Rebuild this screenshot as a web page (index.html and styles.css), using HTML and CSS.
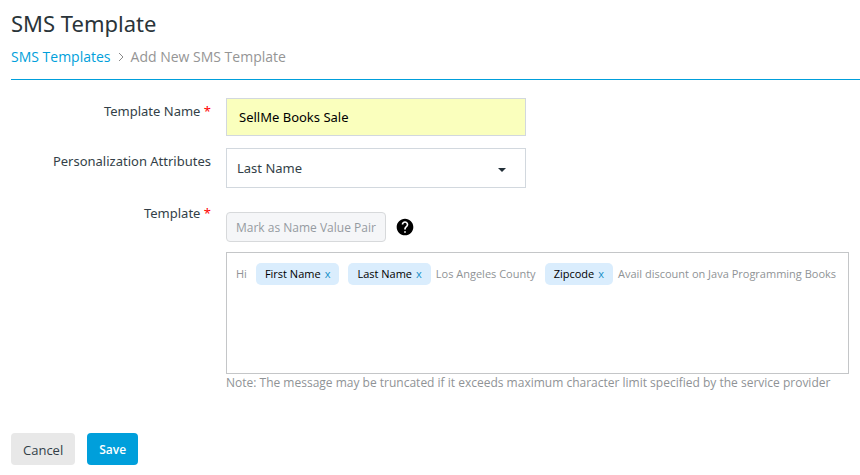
FILE: index.html
```html
<!DOCTYPE html>
<html lang="en">
<head>
<meta charset="utf-8">
<title>SMS Template</title>
<link rel="stylesheet" href="styles.css">
</head>
<body>
<header class="page-head">
  <h1>SMS Template</h1>
  <nav class="crumbs" aria-label="Breadcrumb">
    <a href="#">SMS Templates</a>
    <svg class="chevron" viewBox="0 0 6 10" aria-hidden="true"><path d="M1 1l4 4-4 4"/></svg>
    <span>Add New SMS Template</span>
  </nav>
</header>
<form class="form">
  <div class="row">
    <label class="label" for="name">Template Name <span class="req">*</span></label>
    <input class="field name" id="name" type="text" value="SellMe Books Sale">
  </div>
  <div class="row">
    <label class="label" for="attribute">Personalization Attributes</label>
    <div class="select-wrap">
      <select class="field select" id="attribute"><option>Last Name</option></select>
      <svg class="caret" viewBox="0 0 8 4" aria-hidden="true"><path d="M0 0h8L4 4z"/></svg>
    </div>
  </div>
  <div class="row template-row">
    <span class="label" id="template-label">Template <span class="req">*</span></span>
    <div class="template">
      <div class="tools">
        <button class="btn mark" type="button" disabled>Mark as Name Value Pair</button>
        <button class="help" type="button" aria-label="Help">
          <svg viewBox="0 0 24 24" aria-hidden="true"><path d="M12 2C6.48 2 2 6.48 2 12s4.480 10 10 10 10-4.480 10-10S17.520 2 12 2zm1 17h-2v-2h2v2zm2.070-7.750l-.9.920C13.450 12.900 13 13.500 13 15h-2v-.5c0-1.100.45-2.100 1.170-2.830l1.240-1.260c.37-.36.59-.86.59-1.410 0-1.100-.9-2-2-2s-2 .9-2 2H8c0-2.210 1.790-4 4-4s4 1.790 4 4c0 .88-.36 1.680-.93 2.250z"/></svg>
        </button>
      </div>
      <div class="editor" role="group" aria-labelledby="template-label">
        <span>Hi</span>
        <span class="chip">First Name <button type="button" aria-label="Remove First Name">x</button></span>
        <span class="chip">Last Name <button type="button" aria-label="Remove Last Name">x</button></span>
        <span class="after">Los Angeles County</span>
        <span class="chip">Zipcode <button type="button" aria-label="Remove Zipcode">x</button></span>
        <span class="after">Avail discount on Java Programming Books</span>
      </div>
      <p class="note">Note: The message may be truncated if it exceeds maximum character limit specified by the service provider</p>
    </div>
  </div>
  <div class="actions">
    <button class="btn cancel" type="button">Cancel</button>
    <button class="btn save" type="submit">Save</button>
  </div>
</form>
</body>
</html>
```
FILE: styles.css
```css
* { box-sizing: border-box; }
body {
  margin: 0;
  padding: 8px 0 0 11px;
  background: #fff;
  color: #333f48;
  font: 13px/20px "Noto Sans", "Open Sans", sans-serif;
}
button, input, select { font: inherit; margin: 0; }
h1 { margin: 0 0 9px; font-size: 22px; line-height: 30px; font-weight: 400; color: #2a3439; }
.page-head { border-bottom: 1px solid #009fdb; padding-bottom: 12px; }
.crumbs { display: flex; align-items: center; gap: 7px; color: #959595; font-family: "Open Sans", sans-serif; font-size: 14px; }
.crumbs a { color: #009fdb; text-decoration: none; }
.chevron { width: 6px; height: 10px; fill: none; stroke: #8a8a8a; }
.form { padding: 18px 11px 0 0; }
.row { display: grid; grid-template-columns: 200px minmax(0, 1fr); column-gap: 15px; margin-bottom: 12px; }
.label { padding-top: 3px; text-align: right; }
.req { color: #f00; }
.field { width: 300px; max-width: 100%; border: 1px solid #d2d8de; border-radius: 0; background: #fff; color: #333f48; outline: 0; }
.name { height: 38px; padding: 0 12px; background: #faffbd; color: #000; }
.select-wrap { position: relative; width: 300px; max-width: 100%; height: 40px; }
.select { height: 40px; padding: 0 10px; appearance: none; }
.caret { position: absolute; right: 20px; top: 20px; width: 8px; height: 4px; fill: #222f38; pointer-events: none; }
.template-row { margin: 12px 0 0; }
.tools { display: flex; align-items: center; gap: 9px; margin: 12px 0 10px; }
.btn { border: 0; border-radius: 4px; padding: 2px 12px 0; font-family: "Open Sans", sans-serif; font-size: 12px; }
.mark { height: 30px; padding: 2px 9px 0; border: 1px solid #d7d9db; background: #f5f6f8; color: #959ba1; }
.help { display: flex; width: 20px; height: 20px; padding: 0; border: 0; background: none; }
.help svg { width: 20px; height: 20px; }
.editor {
  display: flex; flex-wrap: wrap; align-content: flex-start; align-items: center; column-gap: 9px;
  min-height: 122px; padding: 10px 9px; border: 1px solid #c4c6c8;
  font-family: "Open Sans", sans-serif; font-size: 11px; color: #8f9396;
}
.chip { display: flex; align-items: center; gap: 4px; height: 22px; padding: 0 9px; border-radius: 5px; background: #daedfd; color: #000; }
.chip button { padding: 0; border: 0; background: none; color: #1790c8; }
.after { margin-left: -4px; }
.note { margin: 0; font-family: "Open Sans", sans-serif; font-size: 12px; line-height: 18px; color: #8f9396; }
.actions { display: flex; gap: 12px; margin-top: 41px; }
.actions .btn { height: 32px; }
.cancel { background: #e8e8e8; color: #333f48; font-size: 13px; }
.save { background: #009fdb; color: #fff; font-weight: 600; }
```
